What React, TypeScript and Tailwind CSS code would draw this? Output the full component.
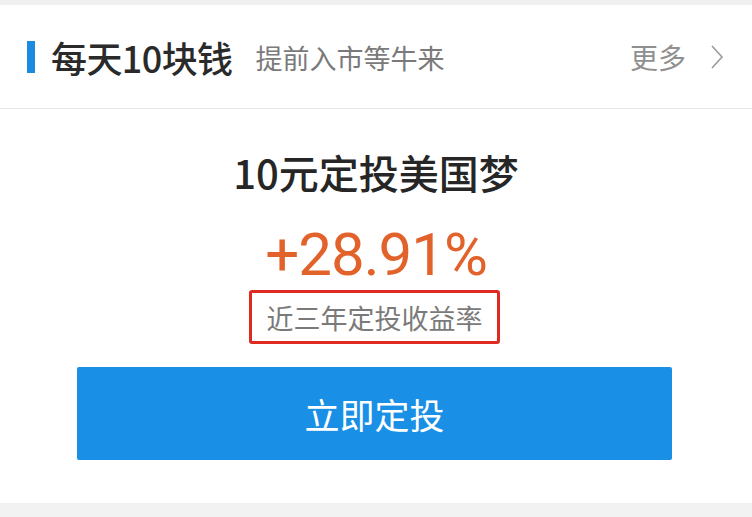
import React from "react";

export default function App() {
  return (
    <div
      className="w-[752px] h-[517px] bg-[#f2f2f2] flex flex-col overflow-hidden"
      style={{ fontFamily: '"Noto Sans CJK SC", "Noto Sans", sans-serif' }}
    >
      <div className="h-[5px] bg-[#f0f0f0]" />
      <div className="h-[104px] bg-white flex items-center pl-[27px] pr-[28px] border-b border-[#e6e6e6]">
        <div className="w-[8px] h-[32px] bg-[#1a8be0]" />
        <div className="ml-[16px] text-[36px] leading-none font-medium text-[#2a2a2a] tracking-[-0.6px]">每天10块钱</div>
        <div className="ml-[23px] text-[27px] leading-none text-[#7a7a7a] mt-[2px]">提前入市等牛来</div>
        <div className="flex-1" />
        <div className="text-[28px] leading-none text-[#8f8f8f]">更多</div>
        <svg className="ml-[24px]" width="14" height="24" viewBox="0 0 14 24" fill="none">
          <path d="M2 1 L12 12 L2 23" stroke="#9a9a9a" strokeWidth="1.6" />
        </svg>
      </div>
      <div className="h-[394px] bg-white flex flex-col items-center">
        <div className="mt-[43px] text-[40px] leading-none font-medium text-[#262626]">10元定投美国梦</div>
        <div
          className="mt-[33px] text-[60px] leading-none text-[#e2622b] tracking-[-1px]"
          style={{ fontFamily: 'Roboto, "Noto Sans", sans-serif' }}
        >
          +28.91%
        </div>
        <div className="mt-[5px] -ml-[3px] w-[251px] h-[54px] border-[3px] border-[#dd2b22] rounded-[3px] flex items-center justify-center">
          <span className="text-[27px] leading-none text-[#7a7a7a]">近三年定投收益率</span>
        </div>
        <button className="mt-[23px] -ml-[3px] w-[595px] h-[93px] bg-[#1a8fe6] rounded-[2px] flex items-center justify-center text-white text-[35px] leading-none">
          立即定投
        </button>
      </div>
    </div>
  );
}
